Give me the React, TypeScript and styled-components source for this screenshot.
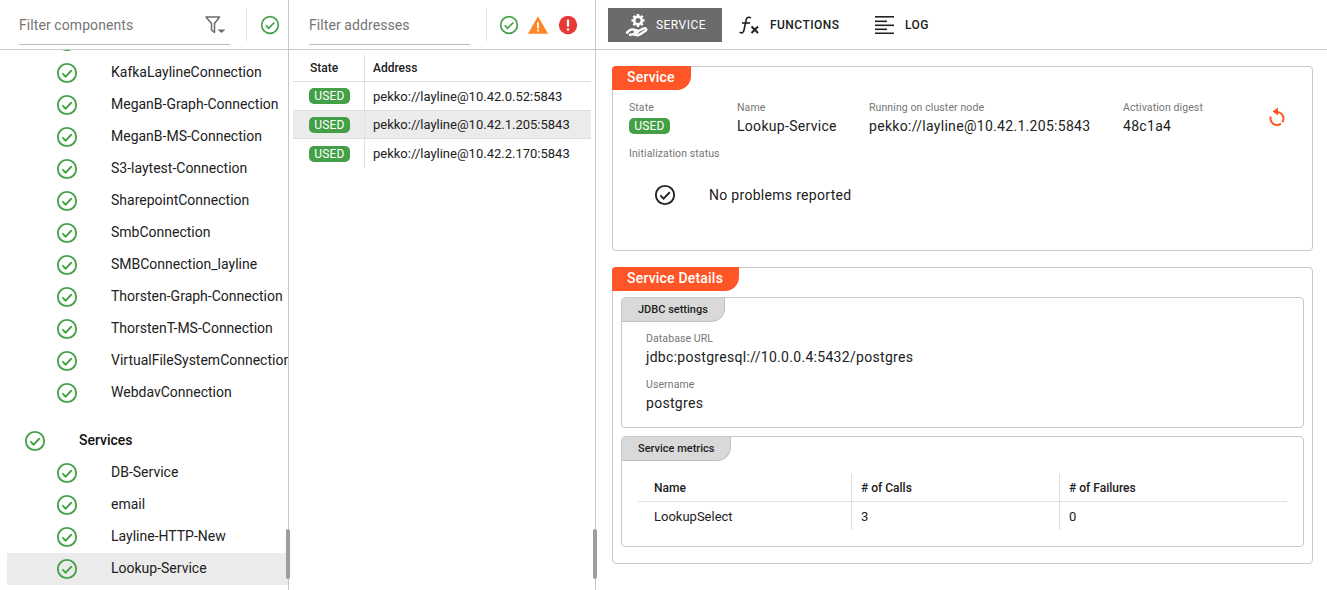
import React from 'react';
import styled, { createGlobalStyle } from 'styled-components';

const GlobalStyle = createGlobalStyle`
  html, body {
    margin: 0;
    padding: 0;
    height: 100%;
    overflow: hidden;
    background: #fff;
  }
  body {
    font-family: Roboto, "Liberation Sans", sans-serif;
    color: #212121;
  }
`;

const Page = styled.div`
  display: flex;
  width: 1327px;
  height: 590px;
  overflow: hidden;
`;

const Pane = styled.div<{ $width?: number }>`
  position: relative;
  display: flex;
  flex-direction: column;
  box-sizing: border-box;
  height: 100%;
  width: ${(p) => (p.$width ? `${p.$width}px` : 'auto')};
  flex: ${(p) => (p.$width ? 'none' : 1)};
  border-right: ${(p) => (p.$width ? '1px solid #c8c8c8' : 'none')};
  min-width: 0;
`;

const Header = styled.div`
  display: flex;
  align-items: center;
  box-sizing: border-box;
  height: 50px;
  flex: none;
  border-bottom: 1px solid #c8c8c8;
`;

const FilterField = styled.div<{ $width: number; $left: number }>`
  display: flex;
  align-items: center;
  justify-content: space-between;
  align-self: flex-start;
  box-sizing: border-box;
  width: ${(p) => p.$width}px;
  height: 37px;
  margin: 8px 0 0 ${(p) => p.$left}px;
  border-bottom: 1px solid #bdbdbd;
  font-size: 14px;
  letter-spacing: 0.08px;
  color: #757575;
  padding-bottom: 3px;
`;

const FilterButton = styled.svg`
  margin-right: 4px;
  flex: none;
`;

const Divider = styled.div<{ $left: number }>`
  width: 1px;
  height: 33px;
  background: #e0e0e0;
  margin-left: ${(p) => p.$left}px;
  margin-right: 13px;
`;

const StatusIcons = styled.div`
  display: flex;
  align-items: center;
  gap: 8px;
  margin-left: -1px;
`;

const TreeScroll = styled.div`
  flex: 1;
  overflow: hidden;
`;

const TreeList = styled.div`
  margin-top: -25px;
  padding-left: 7px;
`;

const TreeRow = styled.div<{ $selected?: boolean; $group?: boolean }>`
  display: flex;
  align-items: center;
  height: 32px;
  white-space: nowrap;
  font-size: 14px;
  font-weight: ${(p) => (p.$group ? 500 : 400)};
  color: ${(p) => (p.$group ? '#111' : '#212121')};
  margin-top: ${(p) => (p.$group ? '16px' : '0')};
  padding-left: ${(p) => (p.$group ? '17px' : '49px')};
  background: ${(p) => (p.$selected ? '#ebebeb' : 'transparent')};
`;

const TreeLabel = styled.span`
  margin-left: 33px;
  padding-bottom: 2px;
`;

const Grip = styled.div`
  position: absolute;
  right: -2px;
  bottom: 11px;
  width: 4px;
  height: 50px;
  border-radius: 2px;
  background: #9e9e9e;
  z-index: 2;
`;

const TableWrap = styled.div`
  padding: 5px 4px 0 4px;
`;

const Row = styled.div<{ $cols: string; $selected?: boolean; $height: number; $head?: boolean; $last?: boolean }>`
  display: grid;
  grid-template-columns: ${(p) => p.$cols};
  height: ${(p) => p.$height}px;
  box-sizing: border-box;
  align-items: center;
  font-size: ${(p) => (p.$head ? 12 : 13)}px;
  font-weight: ${(p) => (p.$head ? 500 : 400)};
  background: ${(p) => (p.$selected ? '#ebebeb' : 'transparent')};
  border-bottom: ${(p) => (p.$last ? 'none' : '1px solid #e0e0e0')};
`;

const Cell = styled.div<{ $pad: number; $sep?: boolean }>`
  display: flex;
  align-items: center;
  height: 100%;
  padding-left: ${(p) => p.$pad}px;
  border-left: ${(p) => (p.$sep ? '1px solid #e0e0e0' : 'none')};
  box-sizing: border-box;
  min-width: 0;
  white-space: nowrap;
`;

const Badge = styled.span`
  display: inline-flex;
  align-items: center;
  justify-content: center;
  width: 41px;
  height: 16px;
  border-radius: 5px;
  background: #43a047;
  color: #fff;
  font-size: 12px;
  letter-spacing: 0.2px;
`;

const Tabs = styled.div`
  display: flex;
  align-items: center;
  padding-left: 12px;
  height: 100%;
`;

const TabButton = styled.div<{ $active?: boolean; $width: number; $gap: number }>`
  display: flex;
  align-items: center;
  gap: ${(p) => p.$gap}px;
  box-sizing: border-box;
  width: ${(p) => p.$width}px;
  height: 34px;
  padding-left: 16px;
  font-size: 12px;
  letter-spacing: 0.45px;
  color: ${(p) => (p.$active ? '#fff' : '#212121')};
  background: ${(p) => (p.$active ? '#6b6b6b' : 'transparent')};
  font-weight: ${(p) => (p.$active ? 400 : 500)};
`;

const ActiveTabIcon = styled.svg`
  margin-left: 1px;
  flex: none;
`;

const Content = styled.div`
  display: flex;
  flex-direction: column;
  gap: 16px;
  padding: 16px 14px 0 16px;
`;

const Card = styled.section<{ $height: number }>`
  box-sizing: border-box;
  height: ${(p) => p.$height}px;
  border: 1px solid #c8c8c8;
  border-radius: 4px;
`;

const CardTab = styled.div`
  display: flex;
  width: fit-content;
  align-items: center;
  height: 24px;
  margin: -1px 0 0 -1px;
  padding: 0 16px 2px 15px;
  box-sizing: border-box;
  background: #ff5527;
  color: #fff;
  font-size: 14px;
  font-weight: 500;
  letter-spacing: 0.2px;
  border-radius: 4px 0 14px 0;
`;

const SubCard = styled.div<{ $height: number; $top?: number }>`
  box-sizing: border-box;
  height: ${(p) => p.$height}px;
  border: 1px solid #c8c8c8;
  border-radius: 4px;
  margin: ${(p) => p.$top ?? 0}px 8px 8px 8px;
`;

const SubTab = styled.div`
  display: flex;
  width: fit-content;
  align-items: center;
  height: 24px;
  padding: 0 16px;
  background: #d9d9d9;
  border-right: 1px solid #c0c0c0;
  border-bottom: 1px solid #c0c0c0;
  box-sizing: border-box;
  color: #212121;
  font-size: 11px;
  font-weight: 500;
  border-radius: 3px 0 14px 0;
`;

const FieldRow = styled.div`
  display: flex;
  align-items: flex-start;
  padding: 11px 0 0 16px;
`;

const Field = styled.div<{ $width: number }>`
  width: ${(p) => p.$width}px;
  flex: none;
`;

const FieldLabel = styled.div`
  font-size: 10.5px;
  line-height: 13px;
  letter-spacing: 0.1px;
  color: #757575;
`;

const FieldValue = styled.div`
  display: flex;
  align-items: center;
  height: 20px;
  font-size: 14px;
  letter-spacing: 0.3px;
  color: #212121;
  margin-top: 2px;
`;

const RefreshButton = styled.div`
  margin: 6px 0 0 45px;
  display: flex;
`;

const InitLabel = styled(FieldLabel)`
  padding: 11px 0 0 16px;
`;

const InitRow = styled.div`
  display: flex;
  align-items: center;
  padding: 24px 0 0 41px;
  font-size: 14px;
  letter-spacing: 0.3px;
  gap: 33px;
`;

const Stack = styled.div`
  display: flex;
  flex-direction: column;
  padding: 10px 0 0 24px;
  gap: 11px;
`;

const MetricsTable = styled.div`
  margin: 13px 16px 0 16px;
`;

const CheckSvg = styled.svg`
  flex: none;
`;

const CheckCircle = ({ size = 22, color = '#43a047' }: { size?: number; color?: string }) => (
  <CheckSvg width={size} height={size} viewBox="0 0 24 24" fill="none">
    <circle cx="12" cy="12" r="10" stroke={color} strokeWidth="2" />
    <path d="M7 12.5l3.4 3.4L17.2 9" stroke={color} strokeWidth="2" />
  </CheckSvg>
);

const WarnIcon = () => (
  <svg width="22" height="22" viewBox="0 0 24 24">
    <path d="M1 21.5L12 2.5l11 19z" fill="#ff8526" />
    <rect x="11" y="9" width="2" height="7" fill="#fff" />
    <rect x="11" y="17" width="2" height="2" fill="#fff" />
  </svg>
);

const ErrorIcon = () => (
  <svg width="22" height="22" viewBox="0 0 24 24">
    <circle cx="12" cy="12" r="10" fill="#e53935" />
    <rect x="10.7" y="6" width="2.6" height="8" rx="1" fill="#fff" />
    <rect x="10.7" y="15.5" width="2.6" height="2.6" rx="1" fill="#fff" />
  </svg>
);

const FilterIcon = () => (
  <FilterButton width="21" height="18" viewBox="0 0 21 18" fill="none">
    <path d="M1 1h13.5L9.5 7.5v9l-3-2.500V7.500z" stroke="#6b6b6b" strokeWidth="1.5" strokeLinejoin="round" />
    <path d="M12.5 13.5h8l-4 3.5z" fill="#6b6b6b" />
  </FilterButton>
);

const teeth = [0, 45, 90, 135];

const ServiceIcon = () => (
  <ActiveTabIcon width="24" height="24" viewBox="0 0 24 24" fill="none" stroke="#fff">
    <circle cx="13" cy="7.5" r="3.8" strokeWidth="2.6" />
    {teeth.map((deg) => (
      <path key={deg} d="M13 1v13" strokeWidth="2.6" strokeDasharray="2 9 2" transform={`rotate(${deg} 13 7.5)`} />
    ))}
    <path d="M1.5 20.5c2-3 4-4.5 6.5-4l4 1c1.6.4 1.3 2.3-.4 2.2l-3-.2" strokeWidth="2.4" />
    <path d="M12.5 18.500l6-3c2.200-1.100 3.800 1 2 2.300l-6 4c-1 .6-2 .7-3 .4l-4-1-3.500 1" strokeWidth="2.4" />
  </ActiveTabIcon>
);

const FunctionIcon = () => (
  <svg width="23" height="22" viewBox="0 0 23 22" fill="none" stroke="#212121" strokeWidth="1.6">
    <path d="M13 4c-2.5-1.5-4.5-.5-5 2.500L6 16c-.5 3-2.500 3.500-4.500 2.200" />
    <path d="M4 9h8" />
    <path d="M13.5 12.500l6.500 6.500M20 12.500L13.500 19" strokeWidth="2" />
  </svg>
);

const LogIcon = () => (
  <svg width="19" height="19" viewBox="0 0 19 19" fill="#212121">
    <rect x="0" y="1" width="19" height="1.6" />
    <rect x="0" y="5.5" width="12" height="1.6" />
    <rect x="0" y="9.5" width="19" height="1.6" />
    <rect x="0" y="13.5" width="12" height="1.6" />
    <rect x="0" y="17.5" width="19" height="1.5" />
  </svg>
);

const RefreshIcon = () => (
  <svg width="18" height="20" viewBox="0 0 18 20" fill="none">
    <path d="M9 5a6.5 6.5 0 1 1-6.2 4.500" stroke="#ff5527" strokeWidth="2" strokeDasharray="14 2 30" />
    <path d="M10 0.5v8L4.500 4.500z" fill="#ff5527" />
  </svg>
);

const topItems = [
  '',
  'KafkaLaylineConnection',
  'MeganB-Graph-Connection',
  'MeganB-MS-Connection',
  'S3-laytest-Connection',
  'SharepointConnection',
  'SmbConnection',
  'SMBConnection_layline',
  'Thorsten-Graph-Connection',
  'ThorstenT-MS-Connection',
  'VirtualFileSystemConnection',
  'WebdavConnection',
];
const serviceItems = ['DB-Service', 'email', 'Layline-HTTP-New', 'Lookup-Service'];

const addresses = [
  { addr: 'pekko://layline@10.42.0.52:5843', height: 29 },
  { addr: 'pekko://layline@10.42.1.205:5843', height: 28, selected: true },
  { addr: 'pekko://layline@10.42.2.170:5843', height: 29, last: true },
];

const addressCols = '71px 1fr';
const metricCols = '213px 208px 1fr';

const App = () => (
  <Page>
    <GlobalStyle />
    <Pane $width={289}>
      <Header>
        <FilterField $width={211} $left={19}>
          Filter components
          <FilterIcon />
        </FilterField>
        <Divider $left={16} />
        <CheckCircle size={20} />
      </Header>
      <TreeScroll>
        <TreeList>
          {topItems.map((name) => (
            <TreeRow key={name}>
              <CheckCircle />
              <TreeLabel>{name}</TreeLabel>
            </TreeRow>
          ))}
          <TreeRow $group>
            <CheckCircle />
            <TreeLabel>Services</TreeLabel>
          </TreeRow>
          {serviceItems.map((name) => (
            <TreeRow key={name} $selected={name === 'Lookup-Service'}>
              <CheckCircle />
              <TreeLabel>{name}</TreeLabel>
            </TreeRow>
          ))}
        </TreeList>
      </TreeScroll>
      <Grip />
    </Pane>
    <Pane $width={307}>
      <Header>
        <FilterField $width={161} $left={20}>Filter addresses</FilterField>
        <Divider $left={16} />
        <StatusIcons>
          <CheckCircle size={20} />
          <WarnIcon />
          <ErrorIcon />
        </StatusIcons>
      </Header>
      <TableWrap>
        <Row $cols={addressCols} $height={27} $head>
          <Cell $pad={17}>State</Cell>
          <Cell $pad={8} $sep>Address</Cell>
        </Row>
        {addresses.map((a) => (
          <Row key={a.addr} $cols={addressCols} $height={a.height} $selected={a.selected} $last={a.last}>
            <Cell $pad={16}><Badge>USED</Badge></Cell>
            <Cell $pad={8} $sep>{a.addr}</Cell>
          </Row>
        ))}
      </TableWrap>
      <Grip />
    </Pane>
    <Pane>
      <Header>
        <Tabs>
          <TabButton $active $width={114} $gap={7}>
            <ServiceIcon />
            SERVICE
          </TabButton>
          <TabButton $width={137} $gap={9}>
            <FunctionIcon />
            FUNCTIONS
          </TabButton>
          <TabButton $width={100} $gap={11}>
            <LogIcon />
            LOG
          </TabButton>
        </Tabs>
      </Header>
      <Content>
        <Card $height={185}>
          <CardTab>Service</CardTab>
          <FieldRow>
            <Field $width={108}>
              <FieldLabel>State</FieldLabel>
              <FieldValue><Badge>USED</Badge></FieldValue>
            </Field>
            <Field $width={132}>
              <FieldLabel>Name</FieldLabel>
              <FieldValue>Lookup-Service</FieldValue>
            </Field>
            <Field $width={254}>
              <FieldLabel>Running on cluster node</FieldLabel>
              <FieldValue>pekko://layline@10.42.1.205:5843</FieldValue>
            </Field>
            <Field $width={100}>
              <FieldLabel>Activation digest</FieldLabel>
              <FieldValue>48c1a4</FieldValue>
            </Field>
            <RefreshButton><RefreshIcon /></RefreshButton>
          </FieldRow>
          <InitLabel>Initialization status</InitLabel>
          <InitRow>
            <CheckCircle color="#212121" />
            No problems reported
          </InitRow>
        </Card>
        <Card $height={297}>
          <CardTab>Service Details</CardTab>
          <SubCard $height={131} $top={6}>
            <SubTab>JDBC settings</SubTab>
            <Stack>
              <div>
                <FieldLabel>Database URL</FieldLabel>
                <FieldValue>jdbc:postgresql://10.0.0.4:5432/postgres</FieldValue>
              </div>
              <div>
                <FieldLabel>Username</FieldLabel>
                <FieldValue>postgres</FieldValue>
              </div>
            </Stack>
          </SubCard>
          <SubCard $height={111}>
            <SubTab>Service metrics</SubTab>
            <MetricsTable>
              <Row $cols={metricCols} $height={28} $head>
                <Cell $pad={16}>Name</Cell>
                <Cell $pad={9} $sep># of Calls</Cell>
                <Cell $pad={9} $sep># of Failures</Cell>
              </Row>
              <Row $cols={metricCols} $height={28} $last>
                <Cell $pad={16}>LookupSelect</Cell>
                <Cell $pad={9} $sep>3</Cell>
                <Cell $pad={9} $sep>0</Cell>
              </Row>
            </MetricsTable>
          </SubCard>
        </Card>
      </Content>
    </Pane>
  </Page>
);

export default App;
